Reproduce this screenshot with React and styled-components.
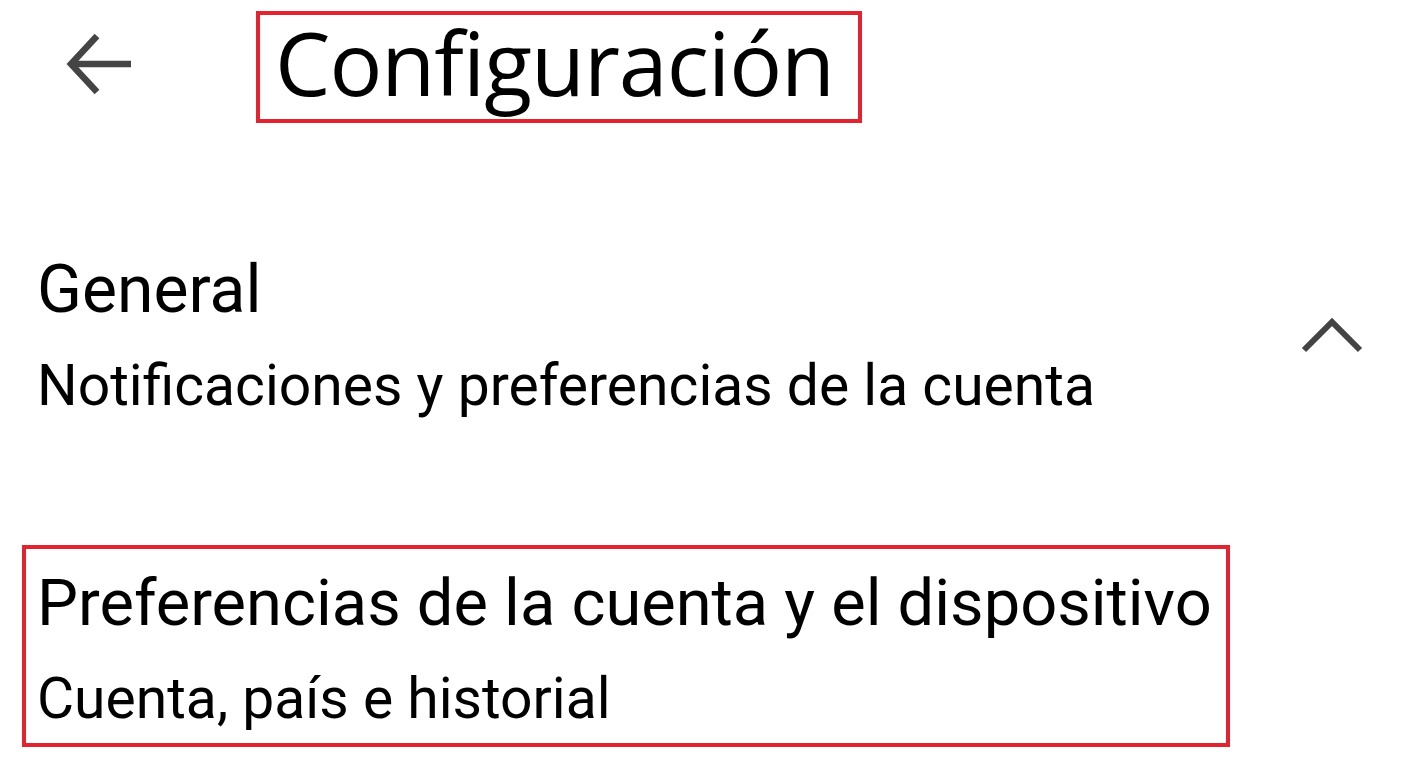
import React from "react";
import styled, { createGlobalStyle } from "styled-components";

const Global = createGlobalStyle`
  html, body { margin: 0; padding: 0; background: #ffffff; }
  body { font-family: Roboto, "Liberation Sans", sans-serif; color: #000; }
`;

const Page = styled.div`
  width: 1402px;
  height: 774px;
  overflow: hidden;
  display: flex;
  flex-direction: column;
  padding-top: 11px;
  box-sizing: border-box;
`;

const Header = styled.header`
  display: flex;
  align-items: flex-start;
  padding-left: 66px;
`;

const BackButton = styled.button`
  border: 0;
  background: none;
  padding: 0;
  margin-top: 21px;
  width: 66px;
  height: 64px;
  display: flex;
  align-items: center;
  justify-content: center;
  color: #444;
`;

const Highlight = styled.div`
  border: 4px solid #e32330;
  box-sizing: border-box;
`;

const TitleBox = styled(Highlight)`
  margin-left: 124px;
  width: 606px;
  height: 112px;
  display: flex;
  align-items: center;
  padding: 0 0 10px 15px;
`;

const Title = styled.h1`
  margin: 0;
  font-family: "Open Sans", sans-serif;
  font-weight: 400;
  font-size: 88px;
  line-height: 1;
  letter-spacing: -1px;
`;

const Item = styled.div`
  display: flex;
  align-items: flex-start;
  justify-content: space-between;
  padding: 0 38px 0 37px;
  margin-top: 119px;
`;

const ItemText = styled.div`
  display: flex;
  flex-direction: column;
`;

const ItemTitle = styled.div`
  font-size: ${(p) => p.$size || 66}px;
  line-height: 96px;
`;

const ItemSub = styled.div`
  font-size: 57px;
  line-height: 96px;
`;

const Chevron = styled.svg`
  margin-top: 72px;
  flex: none;
`;

const BoxedItem = styled(Highlight)`
  margin: 111px 0 0 22px;
  width: 1208px;
  height: 202px;
  padding: 6px 0 0 11px;
  overflow: hidden;
`;

export default function App() {
  return (
    <Page>
      <Global />
      <Header>
        <BackButton aria-label="Atrás">
          <svg width="66" height="64" viewBox="0 0 66 64">
            <path
              d="M31 4 L5 32 L31 60 M5 32 H65"
              fill="none"
              stroke="currentColor"
              strokeWidth="6.5"
            />
          </svg>
        </BackButton>
        <TitleBox>
          <Title>Configuración</Title>
        </TitleBox>
      </Header>
      <Item>
        <ItemText>
          <ItemTitle>General</ItemTitle>
          <ItemSub>Notificaciones y preferencias de la cuenta</ItemSub>
        </ItemText>
        <Chevron width="64" height="40" viewBox="0 0 64 40">
          <path d="M4 36 L32 8 L60 36" fill="none" stroke="#444" strokeWidth="6" />
        </Chevron>
      </Item>
      <BoxedItem>
        <ItemTitle $size={65}>Preferencias de la cuenta y el dispositivo</ItemTitle>
        <ItemSub>Cuenta, país e historial</ItemSub>
      </BoxedItem>
    </Page>
  );
}
